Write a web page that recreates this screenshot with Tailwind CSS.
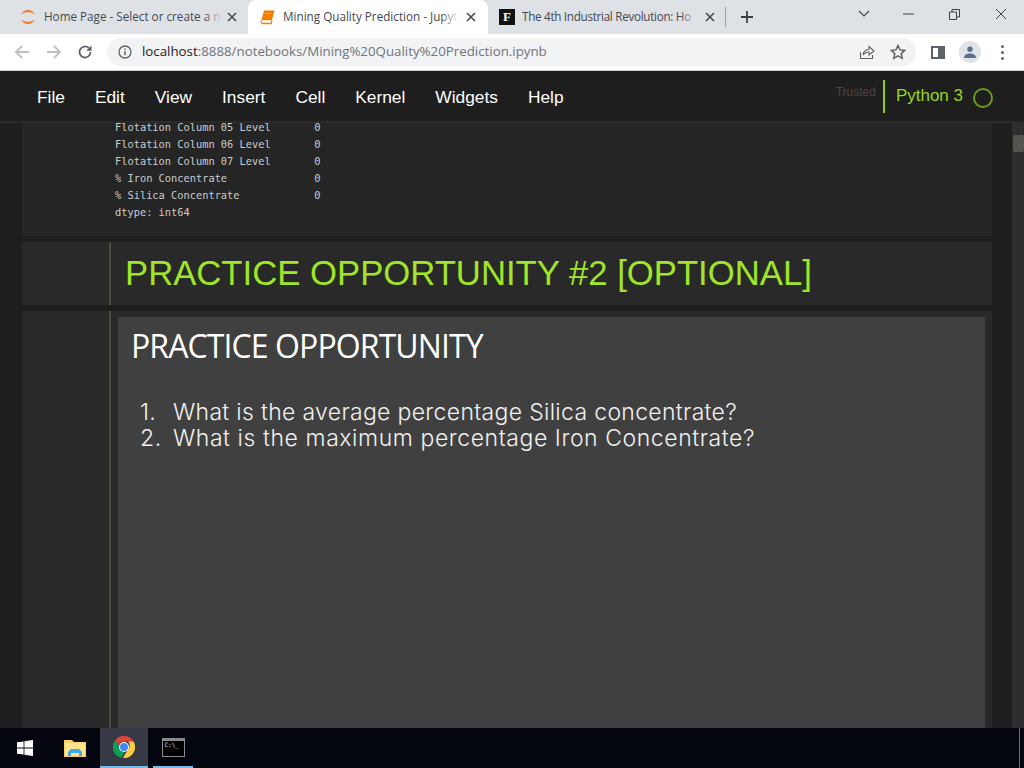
<!DOCTYPE html>
<html lang="en">
<head>
    <meta charset="UTF-8">
    <title>Mining Quality Prediction - Jupyter Notebook</title>
    <script src="https://cdn.jsdelivr.net/npm/@tailwindcss/browser@4"></script>
</head>
<body class="w-[1024px] h-[768px] overflow-hidden flex flex-col bg-[#1e1e1e] font-['Liberation_Sans',sans-serif]">
    <!-- tab strip -->
    <div class="h-[34px] bg-[#dee1e6] flex items-end shrink-0 relative font-['Open_Sans',sans-serif] text-[11.700px] text-[#45494e]">
        <div class="w-[248px] h-[34px] flex items-center pl-[20px]">
            <svg width="16" height="16" viewBox="0 0 16 16" fill="none" class="shrink-0"><path d="M1 5.500C3 2.200 5.300 1 8 1s5 1.200 7 4.500C12.800 3.800 10.500 3.200 8 3.200S3.200 3.800 1 5.500z" fill="#f37726"/><path d="M1 10.500C3 13.800 5.300 15 8 15s5-1.200 7-4.500c-2.200 1.700-4.500 2.300-7 2.300s-4.800-.6-7-2.300z" fill="#f37726"/></svg>
            <span class="ml-[8px] w-[178px] whitespace-nowrap relative">Home Page - Select or create a n<span class="absolute right-0 top-0 w-[18px] h-full bg-linear-to-r from-transparent to-[#dee1e6]"></span></span>
            <svg width="10" height="10" viewBox="0 0 10 10" class="ml-[5px] shrink-0"><path d="M1 1l8 8M9 1l-8 8" stroke="#45494e" stroke-width="1.600"/></svg>
        </div>
        <div class="w-[240px] h-[34px] bg-white rounded-t-[8px] flex items-center pl-[11px]">
            <svg width="16" height="16" viewBox="0 0 16 16" class="shrink-0"><path d="M5 1.500h10.500l-2.700 10H2.500z" fill="#f57c00"/><path d="M2.500 11.500c-.9 2 .2 3 1.500 3h8.300l.5-3" fill="#fff" stroke="#f57c00" stroke-width="1.300"/><path d="M6 4.500h6" stroke="#ffb74d" stroke-width="1"/></svg>
            <span class="ml-[8px] w-[176px] whitespace-nowrap relative">Mining Quality Prediction - Jupyt<span class="absolute right-0 top-0 w-[18px] h-full bg-linear-to-r from-transparent to-white"></span></span>
            <svg width="10" height="10" viewBox="0 0 10 10" class="ml-[7px] shrink-0"><path d="M1 1l8 8M9 1l-8 8" stroke="#45494e" stroke-width="1.600"/></svg>
        </div>
        <div class="w-[238px] h-[34px] flex items-center pl-[11px]">
            <span class="w-[16px] h-[16px] bg-[#111] text-white flex items-center justify-center font-['Liberation_Serif',serif] font-bold text-[13px] shrink-0">F</span>
            <span class="ml-[7px] w-[176px] whitespace-nowrap relative tracking-[-0.3px]">The 4th Industrial Revolution: Ho<span class="absolute right-0 top-0 w-[18px] h-full bg-linear-to-r from-transparent to-[#dee1e6]"></span></span>
            <svg width="10" height="10" viewBox="0 0 10 10" class="ml-[7px] shrink-0"><path d="M1 1l8 8M9 1l-8 8" stroke="#45494e" stroke-width="1.600"/></svg>
            <span class="ml-[10px] w-px h-[20px] bg-[#9aa0a6] shrink-0"></span>
        </div>
        <div class="h-[34px] flex items-center ml-[14px]">
            <svg width="14" height="14" viewBox="0 0 14 14"><path d="M7 1v12M1 7h12" stroke="#3c4043" stroke-width="1.800"/></svg>
        </div>
        <div class="absolute right-0 top-0 h-[28px] flex items-center">
            <svg width="12" height="8" viewBox="0 0 12 8" class="mr-[33px]"><path d="M1 1l5 5 5-5" fill="none" stroke="#3c4043" stroke-width="1.100"/></svg>
            <svg width="11" height="2" viewBox="0 0 11 2" class="mr-[35px]"><path d="M0 1h11" stroke="#3c4043" stroke-width="1"/></svg>
            <svg width="11" height="11" viewBox="0 0 11 11" class="mr-[35px]"><path d="M.5 3h7v7.500h-7zM3 3V.5h7.500v7.500H8" fill="none" stroke="#3c4043" stroke-width="1"/></svg>
            <svg width="12" height="12" viewBox="0 0 12 12" class="mr-[17px]"><path d="M1 1l10 10M11 1L1 11" stroke="#3c4043" stroke-width="1"/></svg>
        </div>
    </div>
    <!-- toolbar -->
    <div class="h-[37px] bg-white border-b border-[#d0d2d6] flex items-center shrink-0">
        <svg width="16" height="16" viewBox="0 0 16 16" class="ml-[14px] shrink-0"><path d="M15 8H2M8 2L2 8l6 6" fill="none" stroke="#bcbfc3" stroke-width="1.800"/></svg>
        <svg width="16" height="16" viewBox="0 0 16 16" class="ml-[16px] shrink-0"><path d="M1 8h13M8 2l6 6-6 6" fill="none" stroke="#bcbfc3" stroke-width="1.800"/></svg>
        <svg width="16" height="16" viewBox="0 0 16 16" class="ml-[15px] shrink-0"><path d="M13.500 8a5.500 5.500 0 1 1-1.600-3.900" fill="none" stroke="#5f6368" stroke-width="1.800"/><path d="M14.500 1.500v5.300H9.200z" fill="#5f6368"/></svg>
        <div class="ml-[14px] w-[809px] h-[28px] rounded-full bg-[#f1f3f4] flex items-center shrink-0">
            <svg width="14" height="14" viewBox="0 0 14 14" class="ml-[11px] shrink-0"><circle cx="7" cy="7" r="6" fill="none" stroke="#5f6368" stroke-width="1.300"/><path d="M7 6v4.200M7 3.500v1.400" stroke="#5f6368" stroke-width="1.400"/></svg>
            <span class="ml-[10px] text-[13.300px] font-['Open_Sans',sans-serif] text-[#70757a] whitespace-nowrap"><span class="text-[#202124]">localhost</span>:8888/notebooks/Mining%20Quality%20Prediction.ipynb</span>
            <svg width="16" height="16" viewBox="0 0 16 16" class="ml-auto shrink-0"><path d="M1.500 8v6.500h12V11" fill="none" stroke="#5f6368" stroke-width="1.100"/><path d="M4 11c.5-3.500 3-5.500 6-5.500V2.500l5 4.500-5 4V8c-2.500 0-4.500 1-6 3z" fill="none" stroke="#5f6368" stroke-width="1.100"/></svg>
            <svg width="16" height="16" viewBox="0 0 16 16" class="ml-[15px] mr-[10px] shrink-0"><path d="M8 1.500l2 4.400 4.800.5-3.600 3.200 1 4.700L8 11.900l-4.200 2.400 1-4.700L1.200 6.400 6 5.900z" fill="none" stroke="#5f6368" stroke-width="1.500"/></svg>
        </div>
        <span class="ml-[15px] w-[14px] h-[13px] border-2 border-[#5f6368] border-r-[7px] shrink-0"></span>
        <span class="ml-[14px] w-[22px] h-[22px] rounded-full bg-[#e0e3e7] flex items-center justify-center shrink-0">
            <svg width="12" height="12" viewBox="0 0 12 12"><circle cx="6" cy="3.200" r="2.700" fill="#5b6f8f"/><path d="M0 12c0-3 2.500-4.500 6-4.500S12 9 12 12z" fill="#5b6f8f"/></svg>
        </span>
        <span class="ml-[20px] flex flex-col gap-[3px] shrink-0">
            <span class="w-[3px] h-[3px] rounded-full bg-[#5f6368]"></span>
            <span class="w-[3px] h-[3px] rounded-full bg-[#5f6368]"></span>
            <span class="w-[3px] h-[3px] rounded-full bg-[#5f6368]"></span>
        </span>
    </div>
    <!-- jupyter menu -->
    <div class="h-[52px] bg-[#1e1e1e] border-b-2 border-[#2b2b2b] flex items-center shrink-0 text-white text-[17.330px] relative z-10">
        <div class="flex gap-[30px] ml-[37px] mt-[3px]">
            <span>File</span><span>Edit</span><span>View</span><span>Insert</span><span>Cell</span><span>Kernel</span><span>Widgets</span><span>Help</span>
        </div>
        <div class="ml-auto flex items-center h-[33px] mt-[1px]">
            <span class="text-[12px] text-[#4a4543] -mt-[10px]">Trusted</span>
            <span class="ml-[7px] w-[2px] h-[33px] bg-[#8fd01e]"></span>
            <span class="ml-[11px] text-[17px] text-[#94d820] -mt-[2px]">Python 3</span>
            <span class="ml-[10px] mr-[31px] w-[20px] h-[20px] rounded-full border-2 border-[#6a9a1e] mt-[2px]"></span>
        </div>
    </div>
    <!-- notebook -->
    <div class="flex-1 min-h-0 flex">
        <div class="w-[22px] shrink-0"></div>
        <div class="w-[970px] shrink-0 flex flex-col gap-[6px]">
            <div class="h-[113px] bg-[#252525] pl-[93px] shrink-0">
                <pre class="font-['DejaVu_Sans_Mono',monospace] text-[10.350px] leading-[17px] text-[#c8cdd2] -mt-[4px]">Flotation Column 05 Level       0
Flotation Column 06 Level       0
Flotation Column 07 Level       0
% Iron Concentrate              0
% Silica Concentrate            0
dtype: int64</pre>
            </div>
            <div class="h-[63px] bg-[#292929] pl-[87px] shrink-0">
                <div class="h-full border-l-2 border-[#4d4d3f] pl-[14px] flex items-center">
                    <h1 class="text-[34.700px] text-[#a0e52a] whitespace-nowrap -mt-[1px]">PRACTICE OPPORTUNITY #2 [OPTIONAL]</h1>
                </div>
            </div>
            <div class="flex-1 min-h-0 bg-[#292929] pl-[87px] pr-[7px]">
                <div class="h-full border-l-2 border-[#4d4d3f] pl-[7px] pt-[6px]">
                    <div class="h-full bg-[#404040] pl-[14px]">
                        <h2 class="text-[32px] font-[520] text-white font-['Open_Sans',sans-serif] tracking-[-0.9px] leading-[44px] pt-[7px] -ml-[1px] whitespace-nowrap">PRACTICE OPPORTUNITY</h2>
                        <ol class="mt-[31px] text-[23px] leading-[26px] text-[#f0f0f0] font-['Inter',sans-serif] font-light">
                            <li class="flex tracking-[0.32px]"><span class="w-[41px] pl-[8px]">1.</span><span>What is the average percentage Silica concentrate?</span></li>
                            <li class="flex tracking-[0.57px]"><span class="w-[41px] pl-[8px]">2.</span><span>What is the maximum percentage Iron Concentrate?</span></li>
                        </ol>
                    </div>
                </div>
            </div>
        </div>
        <div class="w-[20px] shrink-0"></div>
        <div class="w-[12px] shrink-0 bg-[#2e2e2e] pt-[12px] pl-px">
            <div class="h-[17px] bg-[#55554f] rounded-[2px]"></div>
        </div>
    </div>
    <!-- taskbar -->
    <div class="h-[40px] bg-[#03060f] flex shrink-0 relative">
        <div class="w-[50px] flex items-center justify-center">
            <svg width="16" height="16" viewBox="0 0 16 16"><path d="M0 2.300l6.600-.9v6.200H0zM7.400 1.300L16 0v7.600H7.400zM0 8.400h6.600v6.200L0 13.700zM7.400 8.400H16V16l-8.600-1.300z" fill="#fff"/></svg>
        </div>
        <div class="w-[50px] flex items-center justify-center">
            <svg width="22" height="18" viewBox="0 0 22 18"><path d="M0 1h8l2 2h12v15H0z" fill="#f6cf6a"/><path d="M1 4h20v13H1z" fill="#fde38d"/><path d="M4 17v-4l3-3h8l3 3v4h-3v-3H7v3z" fill="#3fa9e8"/></svg>
        </div>
        <div class="w-[48px] bg-[#363a45] border-b-2 border-[#76b9ed] flex items-center justify-center">
            <svg width="22" height="22" viewBox="0 0 22 22">
                <path d="M11 0a11 11 0 0 1 9.500 5.500H11a5.500 5.500 0 0 0-5.300 4L2.300 3.900A11 11 0 0 1 11 0z" fill="#db4437"/>
                <path d="M2.300 3.900l4.700 8.200a5 5 0 0 0 4.700 4.400L8.300 21.800A11 11 0 0 1 2.300 3.900z" fill="#0f9d58"/>
                <path d="M20.500 5.500A11 11 0 0 1 10 22l4.800-8.300A5.500 5.500 0 0 0 15 5.500z" fill="#ffcd40"/>
                <circle cx="11" cy="11" r="5" fill="#fff"/><circle cx="11" cy="11" r="4" fill="#4285f4"/>
            </svg>
        </div>
        <div class="ml-[5px] w-[40px] border-b-2 border-[#76b9ed] flex items-center justify-center">
            <div class="w-[23px] h-[19px] bg-black border border-[#8a8a8a] border-t-[3px] text-[#e0e0e0] text-[6px] leading-[8px] font-['DejaVu_Sans_Mono',monospace] pl-[2px]">C:\_</div>
        </div>
        <span class="absolute right-[4px] top-0 w-px h-full bg-[#6b6f78]"></span>
    </div>
</body>
</html>
